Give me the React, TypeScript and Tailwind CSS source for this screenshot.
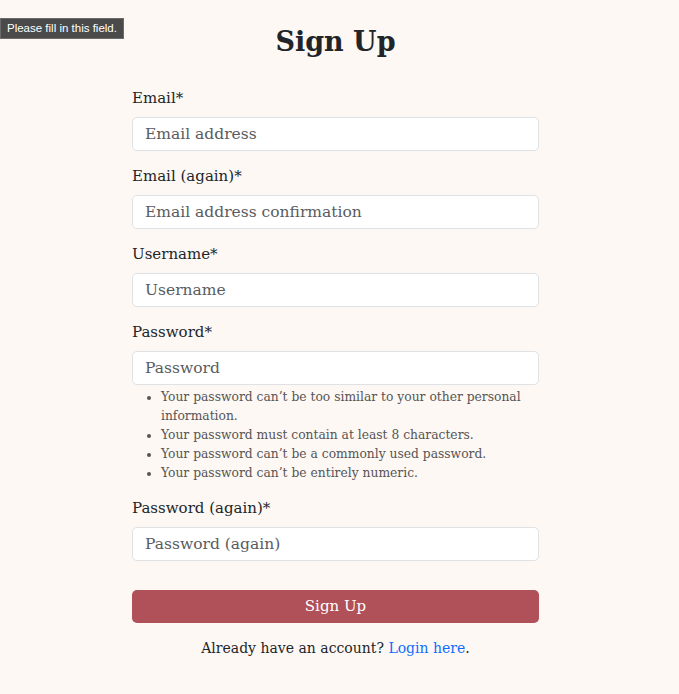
const fields = [
  { label: 'Email*', placeholder: 'Email address', type: 'email' },
  { label: 'Email (again)*', placeholder: 'Email address confirmation', type: 'email' },
  { label: 'Username*', placeholder: 'Username', type: 'text' },
  { label: 'Password*', placeholder: 'Password', type: 'password' },
];

const passwordHelp = [
  'Your password can’t be too similar to your other personal information.',
  'Your password must contain at least 8 characters.',
  'Your password can’t be a commonly used password.',
  'Your password can’t be entirely numeric.',
];

function Field({ label, placeholder, type }: { label: string; placeholder: string; type: string }) {
  return (
    <div>
      <label className="block text-[15px] leading-[22px] mb-2 text-[#212529]">{label}</label>
      <input
        type={type}
        placeholder={placeholder}
        className="block w-full h-[34px] px-3 rounded-[5px] border border-[#dee2e6] bg-white text-[15.5px] text-[#212529] placeholder:text-[#595c5f] outline-none"
      />
    </div>
  );
}

export default function App() {
  return (
    <div
      className="relative min-h-[694px] bg-[#fdf8f4] text-[#212529]"
      style={{ fontFamily: '"DejaVu Serif", "Liberation Serif", serif' }}
    >
      <div
        className="absolute left-0 top-[18px] h-[21px] px-[6px] flex items-center bg-[#4a4a4a] border border-[#6b6b6b] text-white text-[11.5px]"
        style={{ fontFamily: '"Liberation Sans", Arial, sans-serif' }}
      >
        Please fill in this field.
      </div>

      <div className="flex justify-center pr-2">
        <div className="w-[407px] pt-[22px]">
          <h1 className="text-center text-[27px] leading-[40px] font-bold mb-[25px]">Sign Up</h1>

          <form className="flex flex-col">
            {fields.map((f, i) => (
              <div key={f.label} className={i < fields.length - 1 ? 'mb-[14px]' : ''}>
                <Field {...f} />
              </div>
            ))}

            <ul className="list-disc pl-[29px] mt-[3px] mb-[14px] text-[12.3px] leading-[19px] text-[#555]">
              {passwordHelp.map((h) => (
                <li key={h}>{h}</li>
              ))}
            </ul>

            <Field label="Password (again)*" placeholder="Password (again)" type="password" />

            <button
              type="submit"
              className="mt-[29px] h-[33px] w-full rounded-[5px] bg-[#b05058] text-white text-[15px]"
            >
              Sign Up
            </button>

            <p className="mt-[14px] text-center text-[14px] leading-[22px]">
              Already have an account?{' '}
              <a href="#" className="text-[#0d6efd]">
                Login here
              </a>
              .
            </p>
          </form>
        </div>
      </div>
    </div>
  );
}
